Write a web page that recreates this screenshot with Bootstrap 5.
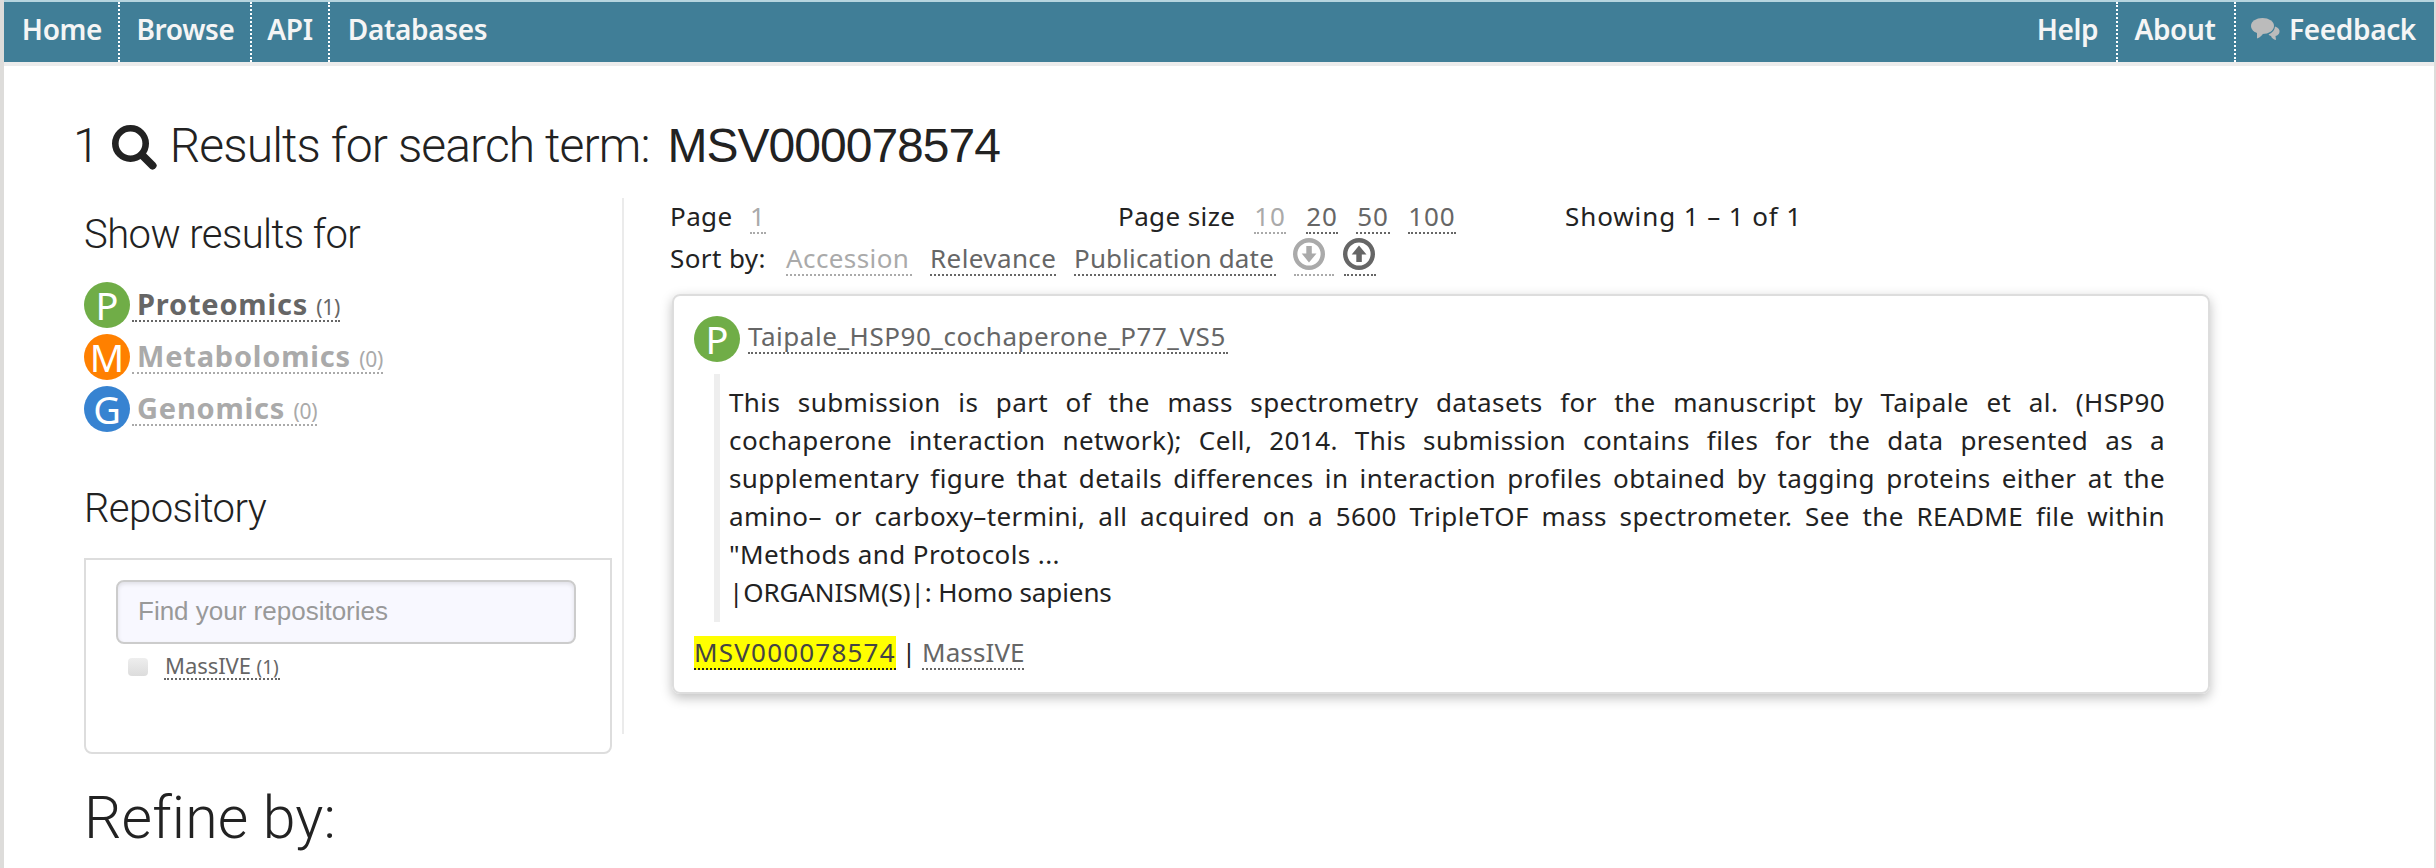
<!DOCTYPE html>
<html lang="en">
<head>
<meta charset="utf-8">
<title>Search results</title>
<link href="https://cdn.jsdelivr.net/npm/bootstrap@5.3.0/dist/css/bootstrap.min.css" rel="stylesheet">
<style>
  body { font: 26px/32px "Noto Sans", sans-serif; color: #222; background: #dddcda; overflow: hidden; letter-spacing: .4px; }
  .page { height: 868px; margin: 0 2px 0 4px; background: #fff; }
  .topbar { height: 66px; background: #407e97; border-top: 2px solid #b6d5df; border-bottom: 4px solid #ececec; }
  .topbar a { height: 60px; line-height: 54px; font-size: 28px; font-weight: 600; color: #f5f5f5; text-align: center; text-decoration: none; letter-spacing: -.35px; }
  .dot-end { border-right: 2px dotted #fff; }
  .dot-start { border-left: 2px dotted #fff; }
  .w-home { width: 116px; padding-left: 2px; } .w-browse { width: 132px; padding-left: 1px; } .w-api { width: 78px; } .w-db { width: 175px; }
  .w-help { width: 97px; } .w-about { width: 118px; padding-right: 2px; } .w-feedback { width: 200px; padding-right: 3px; }

  h1, h2, h3 { font-family: Roboto, sans-serif; font-weight: 300; margin: 0; }
  h1 { font-size: 48px; line-height: 60px; margin: 50px 0 22px 69px; letter-spacing: -.9px; }
  h1 b { font: 400 48px/60px "Liberation Sans", sans-serif; letter-spacing: -1px; margin-left: 18px; }
  h1 svg { margin: 9px 13px 0 13px; }
  h3 { font-size: 40px; line-height: 48px; letter-spacing: -.55px; }
  .head-show { margin-bottom: 23px; }
  .head-repo { padding-top: 47px; }
  h2 { font-size: 59px; line-height: 70px; margin-top: 29px; letter-spacing: .1px; }

  .sidebar { width: 528px; margin-left: 80px; padding-top: 13px; }
  .rule { width: 2px; height: 536px; background: #ebebeb; margin: 0 46px 0 10px; }
  .results { width: 1540px; padding-top: 2px; }

  .lnk { color: #666; text-decoration: none; border-bottom: 2px dotted #666; height: 34px; line-height: 32px; white-space: nowrap; display: block; }
  .lnk.off { color: #aaa; border-color: #aaa; }
  .omic { height: 46px; margin-bottom: 6px; }
  .omic .lnk { margin: 6px 0 0 2px; padding-left: 5px; font-size: 29px; font-weight: 700; letter-spacing: .8px; }
  .omic small { font-size: 21px; font-weight: 400; letter-spacing: -.3px; }
  .disc { width: 46px; height: 46px; border-radius: 50%; color: #fff; font-size: 38px; line-height: 46px; text-align: center; flex: none; letter-spacing: 0; }
  .disc-p { background: #70ad47; } .disc-m { background: #ff8000; } .disc-g { background: #3783d1; }

  .repo { height: 196px; margin-top: 25px; border: 2px solid #ddd; border-radius: 0 0 8px 8px; padding: 20px 34px 0 30px; }
  .repo .form-control { height: 64px; padding: 0 20px 1px; border: 2px solid #ccc; border-radius: 8px; background: #f8f8ff; font: 26px "Liberation Sans", sans-serif; letter-spacing: 0; box-shadow: inset 0 2px 4px rgba(0,0,0,.1); }
  .repo .form-control::placeholder { color: #999; opacity: 1; }
  .tick { width: 20px; height: 18px; border-radius: 4px; background: linear-gradient(#eee, #dcdcdc); margin: 6px 16px 0 12px; }
  .repo .lnk { font-size: 22px; line-height: 26px; height: 28px; width: 116px; padding-left: 1px; letter-spacing: -.05px; }
  .repo small { font-size: 19px; }

  .pager { height: 42px; }
  .num { letter-spacing: .9px; text-align: center; }
  .hit { margin-left: 2px; margin-top: 10px; height: 400px; border: 2px solid #ddd; border-radius: 8px; box-shadow: 0 4px 12px rgba(0,0,0,.25); padding: 20px; }
  .hit-title { margin: 4px 0 0 8px; width: 480px; letter-spacing: .55px; }
  .abstract { margin: 12px 23px 0 20px; height: 248px; border-left: 6px solid #eee; padding: 9px 0 0 9px; line-height: 38px; }
  .abstract span { display: block; white-space: nowrap; }
  .abstract .full { text-align-last: justify; }
  .abstract .organism { letter-spacing: -.1px; }
  .hit-foot { margin-top: 14px; }
  .hl { background: #ff0; color: #444; border-color: #222; width: 202px; letter-spacing: 1.2px; }
</style>
</head>
<body>
<div class="page">
  <nav class="topbar d-flex">
    <a href="#" class="w-home dot-end">Home</a>
    <a href="#" class="w-browse dot-end">Browse</a>
    <a href="#" class="w-api dot-end">API</a>
    <a href="#" class="w-db">Databases</a>
    <a href="#" class="w-help ms-auto">Help</a>
    <a href="#" class="w-about dot-start">About</a>
    <a href="#" class="w-feedback dot-start d-flex justify-content-center"><svg width="30" height="24" viewBox="0 0 30 24" class="me-2 mt-3 flex-shrink-0" fill="#bbb"><ellipse cx="11.5" cy="8" rx="11.5" ry="8"/><path d="M6 13v7.5q5-2 6.500-6zM24 8.500q5 1.500 4.500 5.500-.5 3-4 4l.5 4q-4-1-5-4-1.500-.3-2.500-1.500 6-2.500 6.500-8z"/></svg>Feedback</a>
  </nav>

  <h1 class="d-flex">1<svg width="45" height="45" viewBox="0 0 45 45" class="flex-shrink-0"><circle cx="18.500" cy="18.500" r="15.200" fill="none" stroke="#222" stroke-width="6.600"/><path d="M30 30l10.500 10.500" stroke="#222" stroke-width="8" stroke-linecap="round"/></svg>Results for search term:<b>MSV000078574</b></h1>

  <div class="d-flex">
    <aside class="sidebar">
      <h3 class="head-show">Show results for</h3>
      <div class="omic d-flex"><div class="disc disc-p">P</div><a href="#" class="lnk">Proteomics <small>(1)</small></a></div>
      <div class="omic d-flex"><div class="disc disc-m">M</div><a href="#" class="lnk off">Metabolomics <small>(0)</small></a></div>
      <div class="omic d-flex"><div class="disc disc-g">G</div><a href="#" class="lnk off">Genomics <small>(0)</small></a></div>
      <h3 class="head-repo">Repository</h3>
      <div class="repo">
        <input type="text" class="form-control" placeholder="Find your repositories">
        <div class="d-flex mt-2"><span class="tick"></span><a href="#" class="lnk">MassIVE <small>(1)</small></a></div>
      </div>
      <h2>Refine by:</h2>
    </aside>
    <div class="rule"></div>
    <main class="results">
      <div class="pager d-flex">
        <span style="width:80px">Page</span><a href="#" class="lnk off" style="width:16px">1</a>
        <span style="width:136px;margin-left:352px">Page size</span>
        <a href="#" class="lnk off num" style="width:32px">10</a>
        <a href="#" class="lnk num" style="width:32px;margin-left:20px">20</a>
        <a href="#" class="lnk num" style="width:34px;margin-left:18px">50</a>
        <a href="#" class="lnk num" style="width:48px;margin-left:18px">100</a>
        <span class="num" style="margin-left:109px">Showing 1 – 1 of 1</span>
      </div>
      <div class="pager d-flex">
        <span style="width:116px">Sort by:</span>
        <a href="#" class="lnk off" style="width:126px">Accession</a>
        <a href="#" class="lnk" style="width:126px;margin-left:18px">Relevance</a>
        <a href="#" class="lnk" style="width:202px;margin-left:18px;letter-spacing:.15px">Publication date</a>
        <a href="#" class="lnk off d-flex" style="width:40px;margin-left:18px"><svg class="flex-shrink-0" width="32" height="32" viewBox="0 0 32 32" style="margin:-4px 0 0 -1px"><circle cx="16" cy="16" r="13.800" fill="none" stroke="#aaa" stroke-width="4.400"/><path d="M13.300 8h5.500v7.500h4.700L16 24.500 8.700 15.500h4.600z" fill="#aaa"/></svg></a>
        <a href="#" class="lnk d-flex" style="width:32px;margin-left:10px"><svg class="flex-shrink-0" width="32" height="32" viewBox="0 0 32 32" style="margin:-4px 0 0 -1px"><circle cx="16" cy="16" r="13.800" fill="none" stroke="#666" stroke-width="4.400"/><path d="M13.300 24h5.500v-7.500h4.700L16 7.500 8.700 16.500h4.600z" fill="#666"/></svg></a>
      </div>
      <article class="hit">
        <div class="d-flex"><div class="disc disc-p">P</div><a href="#" class="lnk hit-title">Taipale_HSP90_cochaperone_P77_VS5</a></div>
        <div class="abstract">
          <span class="full">This submission is part of the mass spectrometry datasets for the manuscript by Taipale et al. (HSP90</span>
          <span class="full">cochaperone interaction network); Cell, 2014. This submission contains files for the data presented as a</span>
          <span class="full">supplementary figure that details differences in interaction profiles obtained by tagging proteins either at the</span>
          <span class="full">amino– or carboxy–termini, all acquired on a 5600 TripleTOF mass spectrometer. See the README file within</span>
          <span>"Methods and Protocols ...</span>
          <span class="organism">|ORGANISM(S)|: Homo sapiens</span>
        </div>
        <div class="hit-foot d-flex"><a href="#" class="lnk hl">MSV000078574</a><span class="text-center" style="width:26px">|</span><a href="#" class="lnk" style="width:102px;letter-spacing:.1px">MassIVE</a></div>
      </article>
    </main>
  </div>
</div>
<script src="https://cdn.jsdelivr.net/npm/bootstrap@5.3.0/dist/js/bootstrap.bundle.min.js"></script>
</body>
</html>
